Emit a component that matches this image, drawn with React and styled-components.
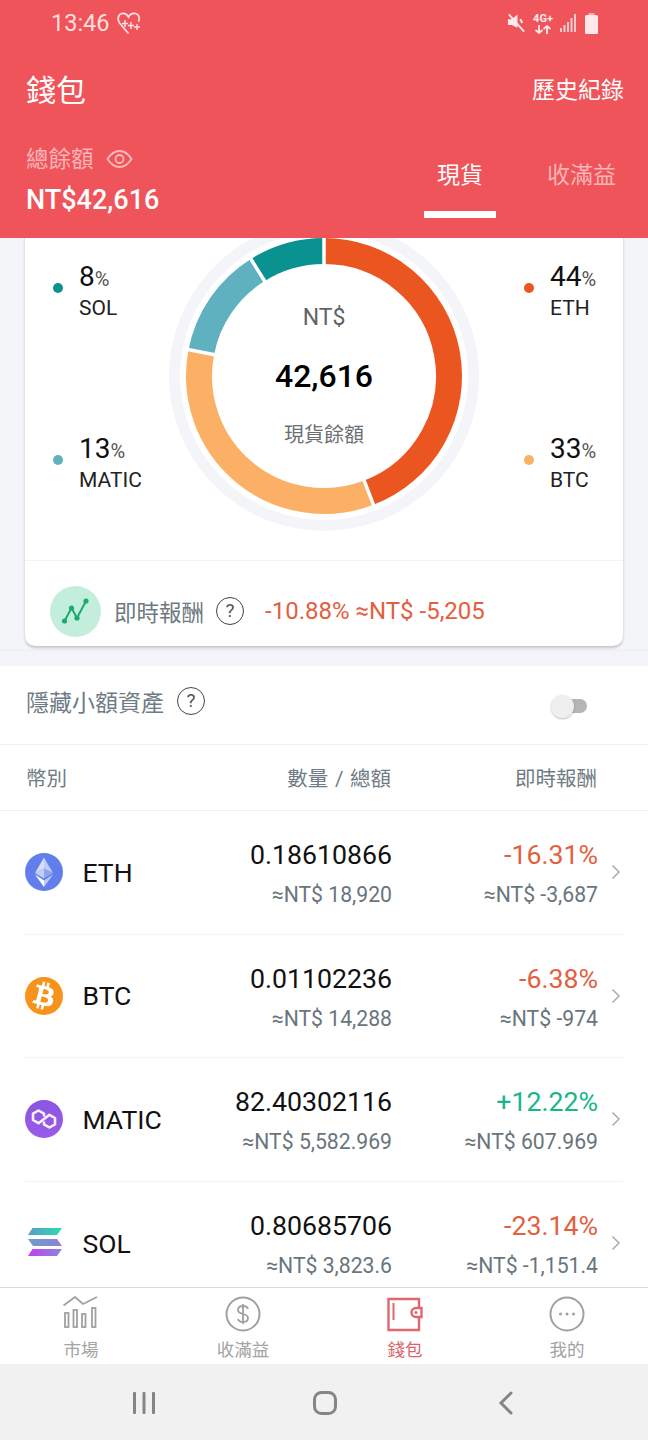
import React from 'react';
import styled, { createGlobalStyle } from 'styled-components';

const GlobalStyle = createGlobalStyle`
  html, body {
    margin: 0;
    padding: 0;
    background: #fff;
  }
  body {
    font-family: Roboto, "Noto Sans CJK TC", sans-serif;
  }
`;

const legendLeft = [
  { value: '8', name: 'SOL', color: '#0A9291' },
  { value: '13', name: 'MATIC', color: '#60B1BF' },
];

const legendRight = [
  { value: '44', name: 'ETH', color: '#EA5520' },
  { value: '33', name: 'BTC', color: '#FBB066' },
];

const segments = [
  { from: 0, to: 159, color: '#EA5520' },
  { from: 159, to: 281, color: '#FBB066' },
  { from: 281, to: 328, color: '#60B1BF' },
  { from: 328, to: 360, color: '#0A9291' },
];

const coins = [
  { name: 'ETH', icon: 'eth', amount: '0.18610866', total: '≈NT$ 18,920', pct: '-16.31%', pnl: '≈NT$ -3,687' },
  { name: 'BTC', icon: 'btc', amount: '0.01102236', total: '≈NT$ 14,288', pct: '-6.38%', pnl: '≈NT$ -974' },
  { name: 'MATIC', icon: 'matic', amount: '82.40302116', total: '≈NT$ 5,582.969', pct: '+12.22%', pnl: '≈NT$ 607.969', up: true },
  { name: 'SOL', icon: 'sol', amount: '0.80685706', total: '≈NT$ 3,823.6', pct: '-23.14%', pnl: '≈NT$ -1,151.4' },
];

const polar = (r, deg) => {
  const a = ((deg - 90) * Math.PI) / 180;
  return [156 + r * Math.cos(a), 156 + r * Math.sin(a)];
};

const arcPath = (r, from, to) => {
  const [x1, y1] = polar(r, from);
  const [x2, y2] = polar(r, to);
  return `M${x1} ${y1}A${r} ${r} 0 ${to - from > 180 ? 1 : 0} 1 ${x2} ${y2}`;
};

const Donut = () => (
  <DonutSvg width="312" height="312" viewBox="0 0 312 312">
    <circle cx="156" cy="156" r="149.5" fill="none" stroke="#F3F5F9" strokeWidth="11" />
    {segments.map((s) => (
      <path key={s.color} d={arcPath(125, s.from, s.to)} fill="none" stroke={s.color} strokeWidth="26" />
    ))}
    {segments.map((s) => {
      const [x1, y1] = polar(110, s.from);
      const [x2, y2] = polar(140, s.from);
      return <line key={s.from} x1={x1} y1={y1} x2={x2} y2={y2} stroke="#fff" strokeWidth="3.5" />;
    })}
  </DonutSvg>
);

const HeartIcon = () => (
  <svg width="26" height="26" viewBox="0 0 26 26" fill="none" stroke="#fff" strokeOpacity="0.85" strokeWidth="1.7">
    <path d="M12.500 23.500 3.500 13C1 9.500 2 4.500 6 3.500c3-.6 5 .8 6.500 3.500 1.500-2.700 4-4.100 7-3.500 4 1 4.500 5 3 8" />
    <path d="M9 10v7M6 13.500h6M15 12v7M12 15.500h6M21 14v6M18 17h6" strokeWidth="1.400" />
  </svg>
);

const StatusIcons = () => (
  <StatusGroup>
    <svg width="19" height="22" viewBox="0 0 20 22" fill="#FDE9EA">
      <path d="M1 7h4l6-5v14l-6-3H1z" />
      <path d="M14 7l2 4M2 2l16 18" stroke="#FDE9EA" strokeWidth="2" />
    </svg>
    <NetBlock>
      <NetLabel>4G+</NetLabel>
      <svg width="18" height="9" viewBox="0 0 18 9" fill="none" stroke="#FDE9EA" strokeWidth="1.800">
        <path d="M5 0v8M1.500 5 5 8l3.500-3M13 9V1M9.500 4 13 1l3.500 3" />
      </svg>
    </NetBlock>
    <svg width="17" height="20" viewBox="0 0 17 20" fill="#FBC9CB">
      <rect x="0" y="15" width="2" height="4" />
      <rect x="3.500" y="12" width="2" height="7" />
      <rect x="7" y="9" width="2" height="10" />
      <rect x="10.500" y="5" width="2" height="14" />
      <rect x="14" y="1" width="2" height="18" />
    </svg>
    <svg width="13" height="21" viewBox="0 0 13 21">
      <rect x="3.500" y="0" width="6" height="3" fill="#F9A9AC" />
      <rect x="0" y="2" width="13" height="19" rx="1.500" fill="#FDE9EA" />
    </svg>
  </StatusGroup>
);

const EyeIcon = () => (
  <svg width="27" height="20" viewBox="0 0 27 20" fill="none" stroke="#F9B9BB" strokeWidth="1.800">
    <path d="M1.500 10C5 4.500 9 2 13.500 2S22 4.500 25.500 10C22 15.500 18 18 13.500 18S5 15.500 1.500 10z" />
    <circle cx="13.500" cy="10" r="4" />
  </svg>
);

const TrendIcon = () => (
  <svg width="28" height="28" viewBox="0 0 28 28" fill="none" stroke="#1BAA6E" strokeWidth="2">
    <path d="M2.500 24 9.500 11l5.500 10L24 4" />
    <g fill="#1BAA6E" stroke="none">
      <circle cx="2.500" cy="24" r="2.600" />
      <circle cx="9.500" cy="11" r="2.600" />
      <circle cx="15" cy="21" r="2.600" />
      <circle cx="24" cy="4" r="2.600" />
    </g>
  </svg>
);

const CoinIcon = ({ type }) => {
  if (type === 'eth') {
    return (
      <svg width="38" height="38" viewBox="0 0 38 38">
        <circle cx="19" cy="19" r="19" fill="#627EEA" />
        <path d="M19 4.500v11L28 20z" fill="#fff" fillOpacity="0.6" />
        <path d="M19 4.500 10 20l9-4.500z" fill="#fff" fillOpacity="0.75" />
        <path d="M19 15.500 10 20l9 5.500z" fill="#C1CCF7" />
        <path d="M19 15.500V25.500l9-5.500z" fill="#8FA4EF" />
        <path d="M19 27.500V34l9-12.500z" fill="#fff" fillOpacity="0.6" />
        <path d="M19 27.500 10 21.500 19 34z" fill="#fff" />
      </svg>
    );
  }
  if (type === 'btc') {
    return (
      <svg width="38" height="38" viewBox="0 0 64 64">
        <circle cx="32" cy="32" r="32" fill="#F7931A" />
        <path
          transform="translate(32 32) rotate(0) scale(1.150) translate(-32 -32)"
          fill="#fff"
          fillRule="evenodd"
          d="M46.100 27.400c.6-4.300-2.600-6.600-7.100-8.200l1.500-5.900-3.600-.9-1.400 5.700c-.9-.2-1.900-.5-2.900-.7l1.400-5.800-3.600-.9-1.500 5.900c-.8-.2-1.600-.4-2.300-.5l-5-1.200-1 3.800s2.700.6 2.600.7c1.500.4 1.700 1.300 1.700 2.100l-1.700 6.700-2.400 9.400c-.2.400-.6 1-1.700.8 0 .1-2.600-.7-2.600-.7l-1.800 4.100 4.700 1.200 2.600.7-1.500 6 3.600.9 1.500-5.900c1 .3 1.900.5 2.900.8l-1.500 5.900 3.600.9 1.500-6c6.200 1.200 10.800.7 12.800-4.900 1.600-4.500-.1-7.100-3.300-8.800 2.300-.5 4.100-2 4.600-5.200zM37.900 38.900c-1.100 4.500-8.700 2.100-11.200 1.400l2-8c2.500.6 10.400 1.800 9.200 6.600zm1.100-11.600c-1 4.100-7.300 2-9.400 1.500l1.800-7.200c2.100.5 8.700 1.500 7.600 5.700z"
        />
      </svg>
    );
  }
  if (type === 'matic') {
    return (
      <svg width="38" height="38" viewBox="0 0 38 38">
        <defs>
          <linearGradient id="maticFill" x1="0" y1="0" x2="0" y2="1">
            <stop offset="0" stopColor="#8A56E0" />
            <stop offset="1" stopColor="#9A5AE8" />
          </linearGradient>
        </defs>
        <circle cx="19" cy="19" r="19" fill="url(#maticFill)" />
        <path
          d="M19 16.500V13.700L13.500 10.500 8 13.700V20l5.500 3.200 11-8.400L30 18v6.300l-5.500 3.200L19 24.300V21.500"
          fill="none"
          stroke="#fff"
          strokeOpacity="0.92"
          strokeWidth="2.600"
          strokeLinejoin="round"
        />
      </svg>
    );
  }
  return (
    <svg width="38" height="38" viewBox="0 0 38 38">
      <defs>
        <linearGradient id="solTop" x1="0" y1="0" x2="1" y2="0">
          <stop offset="0" stopColor="#5C9CC4" />
          <stop offset="1" stopColor="#2BDDAE" />
        </linearGradient>
        <linearGradient id="solMid" x1="0" y1="0" x2="1" y2="0">
          <stop offset="0" stopColor="#6F9FC6" />
          <stop offset="1" stopColor="#8C80D8" />
        </linearGradient>
        <linearGradient id="solLow" x1="0" y1="0" x2="1" y2="0">
          <stop offset="0" stopColor="#C23FEE" />
          <stop offset="1" stopColor="#8A86DC" />
        </linearGradient>
      </defs>
      <path d="M7.500 4H37l-5 7H3z" fill="url(#solTop)" />
      <path d="M3 15h29l5 7H8z" fill="url(#solMid)" />
      <path d="M7.500 25H37l-5 7H3z" fill="url(#solLow)" />
    </svg>
  );
};

const Chevron = () => (
  <svg width="10" height="16" viewBox="0 0 10 16" fill="none" stroke="#A8AEB2" strokeWidth="1.500">
    <path d="M1.500 1.500 8 8l-6.500 6.500" />
  </svg>
);

const navItems = [
  {
    label: '市場',
    icon: (
      <svg width="36" height="36" viewBox="0 0 36 36" fill="none" stroke="#A0A0A0" strokeWidth="1.800">
        <path d="M0.500 9.500 12 1l8 7 14-7" />
        <rect x="2" y="17" width="3.500" height="14" />
        <rect x="10.500" y="14" width="3.500" height="17" />
        <rect x="19" y="18" width="3.500" height="13" />
        <rect x="29" y="12" width="3.500" height="19" />
      </svg>
    ),
  },
  {
    label: '收滿益',
    icon: (
      <svg width="36" height="36" viewBox="0 0 36 36" fill="none" stroke="#A0A0A0" strokeWidth="2">
        <circle cx="18" cy="18" r="16.500" />
        <path d="M23 13c-.5-2-2.500-3-5-3s-5 1.300-5 4c0 5.500 10 2.500 10 8 0 2.700-2.500 4-5 4s-4.500-1-5-3M18 8v20" strokeWidth="1.800" />
      </svg>
    ),
  },
  {
    label: '錢包',
    active: true,
    icon: (
      <svg width="36" height="36" viewBox="0 0 36 36" fill="none" stroke="#DE686E" strokeWidth="2.400">
        <path d="M32 12V3H1.500v31H32v-13" />
        <path d="M6.500 7v17" strokeWidth="2" />
        <path d="M34.500 12H29a4.500 4.500 0 0 0 0 9h5.500z" fill="#fff" />
        <circle cx="29" cy="16.500" r="1.500" fill="#DE686E" stroke="none" />
      </svg>
    ),
  },
  {
    label: '我的',
    icon: (
      <svg width="36" height="36" viewBox="0 0 36 36" fill="none" stroke="#A0A0A0" strokeWidth="2">
        <circle cx="18" cy="18" r="16.500" />
        <g fill="#A0A0A0" stroke="none">
          <circle cx="11.500" cy="18" r="1.500" />
          <circle cx="18" cy="18" r="1.500" />
          <circle cx="24.500" cy="18" r="1.500" />
        </g>
      </svg>
    ),
  },
];

const App = () => {
  return (
    <Screen>
      <GlobalStyle />
      <Header>
        <StatusBar>
          <StatusLeft>
            <StatusTime>13:46</StatusTime>
            <HeartIcon />
          </StatusLeft>
          <StatusIcons />
        </StatusBar>
        <TitleRow>
          <Title>錢包</Title>
          <HistoryLink>歷史紀錄</HistoryLink>
        </TitleRow>
        <BalanceRow>
          <div>
            <BalanceLabel>
              總餘額
              <EyeIcon />
            </BalanceLabel>
            <BalanceValue>NT$42,616</BalanceValue>
          </div>
          <Tabs>
            <Tab $active>現貨</Tab>
            <Tab>收滿益</Tab>
          </Tabs>
        </BalanceRow>
      </Header>

      <Content>
        <Card>
          <ChartArea>
            <LegendColumn>
              {legendLeft.map((l) => (
                <Legend key={l.name} {...l} />
              ))}
            </LegendColumn>
            <DonutBox>
              <Donut />
              <DonutCenter>
                <DonutCurrency>NT$</DonutCurrency>
                <DonutValue>42,616</DonutValue>
                <DonutCaption>現貨餘額</DonutCaption>
              </DonutCenter>
            </DonutBox>
            <LegendColumn $right>
              {legendRight.map((l) => (
                <Legend key={l.name} {...l} />
              ))}
            </LegendColumn>
          </ChartArea>
          <ProfitRow>
            <TrendBadge>
              <TrendIcon />
            </TrendBadge>
            <ProfitLabel>即時報酬</ProfitLabel>
            <HelpMark>?</HelpMark>
            <ProfitValue>-10.88% ≈NT$ -5,205</ProfitValue>
          </ProfitRow>
        </Card>
        <Divider />

        <AssetPanel>
          <HideRow>
            <HideLabel>隱藏小額資產</HideLabel>
            <HelpMark>?</HelpMark>
            <Toggle>
              <ToggleThumb />
            </Toggle>
          </HideRow>
          <TableHead>
            <HeadName>幣別</HeadName>
            <HeadAmount>數量 / 總額</HeadAmount>
            <HeadProfit>即時報酬</HeadProfit>
          </TableHead>
          {coins.map((c) => (
            <CoinRow key={c.name}>
              <CoinLogo>
                <CoinIcon type={c.icon} />
              </CoinLogo>
              <CoinName>{c.name}</CoinName>
              <CoinAmount>
                <MainNumber>{c.amount}</MainNumber>
                <SubNumber>{c.total}</SubNumber>
              </CoinAmount>
              <CoinProfit>
                <MainNumber $tone={c.up ? '#17B58A' : '#E2603F'}>{c.pct}</MainNumber>
                <SubNumber>{c.pnl}</SubNumber>
              </CoinProfit>
              <ChevronBox>
                <Chevron />
              </ChevronBox>
            </CoinRow>
          ))}
        </AssetPanel>
      </Content>

      <BottomNav>
        {navItems.map((n) => (
          <NavItem key={n.label} $active={n.active}>
            {n.icon}
            <NavLabel>{n.label}</NavLabel>
          </NavItem>
        ))}
      </BottomNav>

      <SystemBar>
        <svg width="24" height="24" viewBox="0 0 24 24" fill="#858585">
          <rect x="1" y="1" width="3" height="22" rx="1" />
          <rect x="10.500" y="1" width="3" height="22" rx="1" />
          <rect x="20" y="1" width="3" height="22" rx="1" />
        </svg>
        <svg width="24" height="24" viewBox="0 0 24 24" fill="none" stroke="#858585" strokeWidth="3">
          <rect x="1.500" y="1.500" width="21" height="21" rx="7" />
        </svg>
        <svg width="16" height="24" viewBox="0 0 16 24" fill="none" stroke="#858585" strokeWidth="3" strokeLinecap="round">
          <path d="M13 2 3 12l10 10" />
        </svg>
      </SystemBar>
    </Screen>
  );
};

const Legend = ({ value, name, color }) => (
  <LegendItem>
    <LegendDot $color={color} />
    <div>
      <LegendValue>
        {value}
        <LegendPercent>%</LegendPercent>
      </LegendValue>
      <LegendName>{name}</LegendName>
    </div>
  </LegendItem>
);

const Screen = styled.div`
  width: 648px;
  height: 1440px;
  display: flex;
  flex-direction: column;
  overflow: hidden;
  background: #fff;
`;

const Header = styled.header`
  flex: none;
  height: 238px;
  background: #ef545b;
  color: #fff;
  position: relative;
  z-index: 2;
`;

const StatusBar = styled.div`
  height: 46px;
  display: flex;
  align-items: center;
  justify-content: space-between;
  padding: 0 50px 0 51px;
`;

const StatusLeft = styled.div`
  display: flex;
  align-items: center;
  gap: 6px;
`;

const StatusTime = styled.span`
  font-size: 23.500px;
  color: rgba(255, 255, 255, 0.82);
`;

const StatusGroup = styled.div`
  display: flex;
  align-items: center;
  gap: 8px;
`;

const NetBlock = styled.div`
  width: 18px;
  display: flex;
  flex-direction: column;
  align-items: center;
`;

const NetLabel = styled.span`
  font-size: 11px;
  line-height: 12px;
  font-weight: 700;
  white-space: nowrap;
  color: #fde9ea;
`;

const TitleRow = styled.div`
  height: 86px;
  box-sizing: border-box;
  display: flex;
  align-items: center;
  justify-content: space-between;
  padding: 0 24px 3px 26px;
`;

const Title = styled.h1`
  margin: 0;
  font-size: 30px;
  font-weight: 400;
`;

const HistoryLink = styled.span`
  font-size: 23px;
`;

const BalanceRow = styled.div`
  display: flex;
  justify-content: space-between;
  align-items: flex-start;
  padding: 10px 19px 0 26px;
`;

const BalanceLabel = styled.div`
  display: flex;
  align-items: center;
  gap: 12px;
  font-size: 22.500px;
  line-height: 34px;
  color: #f9b4b6;
`;

const BalanceValue = styled.div`
  margin-top: 6px;
  font-size: 27px;
  line-height: 36px;
  font-weight: 500;
`;

const Tabs = styled.div`
  display: flex;
  gap: 38px;
  margin-top: 17px;
`;

const Tab = styled.div`
  padding: 0 13px;
  height: 52px;
  font-size: 23px;
  line-height: 34px;
  color: ${(p) => (p.$active ? '#fff' : '#f9b4b6')};
  border-bottom: 7px solid ${(p) => (p.$active ? '#fff' : 'transparent')};
  box-sizing: content-box;
`;

const Content = styled.main`
  flex: 1;
  min-height: 0;
  overflow: hidden;
  background: #f3f5f9;
`;

const Card = styled.section`
  margin: -32px 25px 0;
  background: #fff;
  border-radius: 10px;
  box-shadow: 0 2px 3px rgba(0, 0, 0, 0.2);
`;

const ChartArea = styled.div`
  height: 355px;
  display: grid;
  grid-template-columns: 143px 312px 1fr;
  padding-top: 14px;
  box-sizing: border-box;
  border-bottom: 1px solid #f1f3f5;
`;

const LegendColumn = styled.div`
  display: flex;
  flex-direction: column;
  gap: 103.500px;
  padding: 34px 0 0 ${(p) => (p.$right ? '44px' : '28px')};
`;

const LegendItem = styled.div`
  display: flex;
  align-items: center;
  gap: 16px;
  height: 69px;
`;

const LegendDot = styled.span`
  width: 10px;
  height: 10px;
  margin-top: -2px;
  flex: none;
  border-radius: 50%;
  background: ${(p) => p.$color};
`;

const LegendValue = styled.div`
  font-size: 28px;
  line-height: 36px;
  color: #111;
`;

const LegendPercent = styled.span`
  font-size: 20px;
  color: #555;
`;

const LegendName = styled.div`
  font-size: 21px;
  line-height: 22px;
  color: #222;
`;

const DonutBox = styled.div`
  position: relative;
  width: 312px;
  height: 312px;
`;

const DonutSvg = styled.svg`
  display: block;
`;

const DonutCenter = styled.div`
  position: absolute;
  inset: 0;
  display: flex;
  flex-direction: column;
  align-items: center;
`;

const DonutCurrency = styled.div`
  margin-top: 82px;
  font-size: 23px;
  line-height: 32px;
  color: #5f6468;
`;

const DonutValue = styled.div`
  margin-top: 23px;
  font-size: 32px;
  line-height: 38px;
  font-weight: 500;
  color: #000;
`;

const DonutCaption = styled.div`
  margin-top: 25px;
  font-size: 20px;
  line-height: 30px;
  color: #6b6f73;
`;

const ProfitRow = styled.div`
  height: 85px;
  display: flex;
  align-items: center;
  padding: 15px 0 0 25px;
  box-sizing: border-box;
`;

const TrendBadge = styled.div`
  width: 51px;
  height: 51px;
  border-radius: 50%;
  background: #c4eedc;
  display: flex;
  align-items: center;
  justify-content: center;
`;

const ProfitLabel = styled.span`
  margin: 0 12px 0 13px;
  font-size: 22.500px;
  color: #6f7a80;
`;

const HelpMark = styled.span`
  width: 28px;
  height: 28px;
  box-sizing: border-box;
  flex: none;
  border: 1.500px solid #444;
  border-radius: 50%;
  font-size: 19px;
  line-height: 25px;
  text-align: center;
  color: #555;
`;

const ProfitValue = styled.span`
  margin-left: 21px;
  font-size: 24px;
  color: #e2603f;
`;

const Divider = styled.div`
  height: 20px;
  box-sizing: border-box;
  padding-top: 4px;
  &::before {
    content: '';
    display: block;
    height: 1px;
    background: #eceef1;
  }
`;

const AssetPanel = styled.section`
  background: #fff;
`;

const HideRow = styled.div`
  height: 79px;
  box-sizing: border-box;
  display: flex;
  align-items: center;
  padding: 0 61px 9px 26px;
  border-bottom: 1px solid #eceef0;
`;

const HideLabel = styled.span`
  margin-right: 13px;
  font-size: 23px;
  color: #6f7c85;
`;

const Toggle = styled.div`
  position: relative;
  margin: 11px 0 0 auto;
  width: 34px;
  height: 14px;
  border-radius: 7px;
  background: #b5b5b5;
`;

const ToggleThumb = styled.div`
  position: absolute;
  left: -2px;
  top: -4px;
  width: 23px;
  height: 23px;
  border-radius: 50%;
  background: #efefef;
  box-shadow: 0 1px 2px rgba(0, 0, 0, 0.25);
`;

const TableHead = styled.div`
  height: 66px;
  box-sizing: border-box;
  display: flex;
  align-items: center;
  padding: 0 51px 2px 26px;
  font-size: 20.500px;
  color: #6f7c85;
  border-bottom: 1px solid #eceef0;
`;

const HeadName = styled.span`
  flex: 1;
`;

const HeadAmount = styled.span`
  width: 206px;
  text-align: right;
  white-space: nowrap;
  word-spacing: 1.500px;
`;

const HeadProfit = styled.span`
  width: 206px;
  text-align: right;
`;

const CoinRow = styled.div`
  height: 123.500px;
  box-sizing: border-box;
  margin: 0 25px;
  display: flex;
  align-items: center;
  border-bottom: 1px solid #f1f3f5;
  &:last-child {
    border-bottom: none;
  }
`;

const CoinLogo = styled.div`
  width: 38px;
  height: 38px;
  flex: none;
  svg {
    display: block;
  }
`;

const CoinName = styled.span`
  flex: 1;
  margin-left: 19.500px;
  font-size: 26.500px;
  color: #111;
`;

const CoinAmount = styled.div`
  width: 206px;
  margin-top: 3px;
  text-align: right;
`;

const CoinProfit = styled.div`
  width: 206px;
  margin-top: 3px;
  text-align: right;
`;

const MainNumber = styled.div`
  font-size: 26.700px;
  line-height: 36px;
  color: ${(p) => p.$tone || '#111'};
`;

const SubNumber = styled.div`
  margin-top: 7px;
  font-size: 21.200px;
  line-height: 30px;
  color: #69757c;
`;

const ChevronBox = styled.div`
  width: 25px;
  flex: none;
  display: flex;
  justify-content: flex-end;
  padding-right: 2px;
  box-sizing: border-box;
`;

const BottomNav = styled.nav`
  flex: none;
  height: 77px;
  box-sizing: border-box;
  display: grid;
  grid-template-columns: repeat(4, 1fr);
  background: #fff;
  border-top: 1px solid #d9d9d9;
  position: relative;
`;

const NavItem = styled.div`
  display: flex;
  flex-direction: column;
  align-items: center;
  padding-top: 8px;
  color: ${(p) => (p.$active ? '#d9646b' : '#a3a3a3')};
`;

const NavLabel = styled.span`
  margin-top: 5px;
  font-size: 17.500px;
  line-height: 26px;
`;

const SystemBar = styled.div`
  flex: none;
  height: 76px;
  box-sizing: border-box;
  padding: 2px 0 0 132px;
  background: #f1f1f1;
  display: grid;
  grid-template-columns: 181px 185px 16px;
  align-items: center;
  svg {
    display: block;
  }
`;

export default App;
